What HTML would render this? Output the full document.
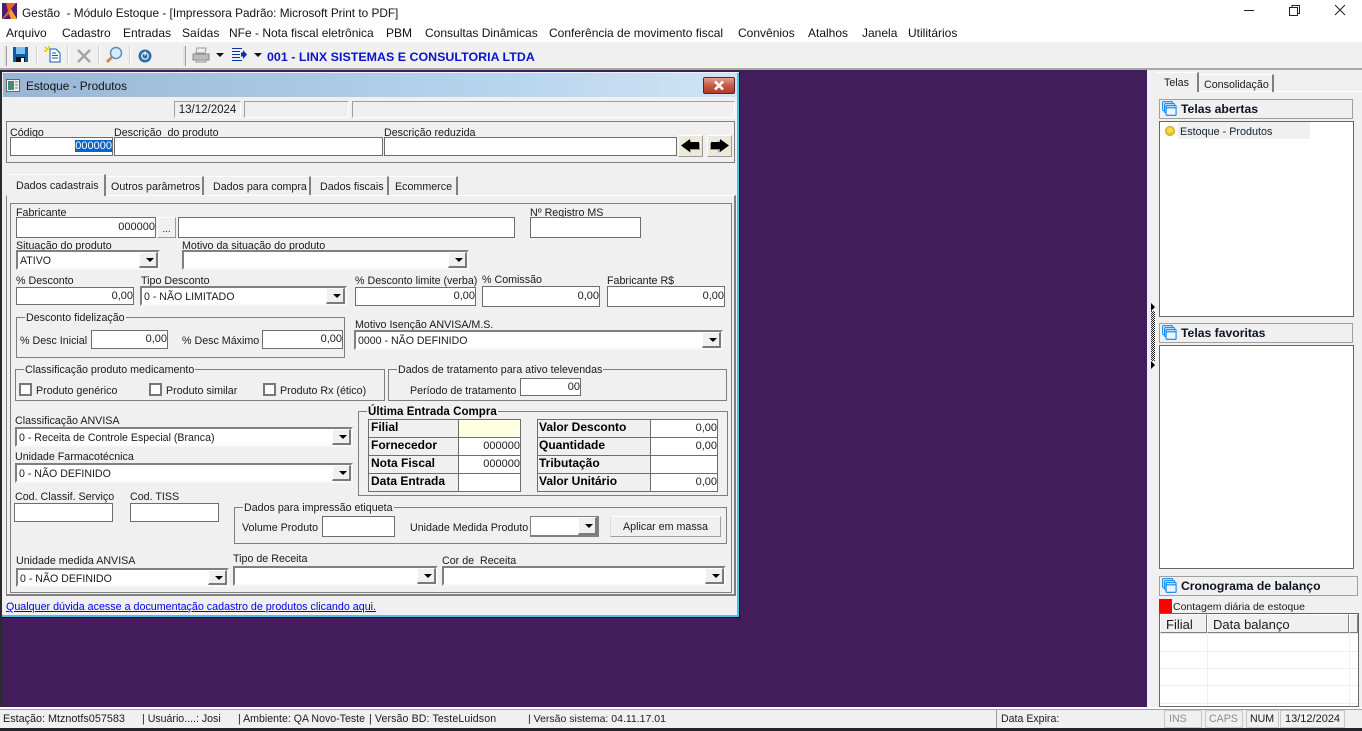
<!DOCTYPE html>
<html lang="pt">
<head>
<meta charset="utf-8">
<title>Gestão</title>
<style>
*{box-sizing:border-box}
html,body{margin:0;padding:0;width:1362px;height:731px;overflow:hidden;background:#f0f0f0}
body{position:relative;font-family:"Liberation Sans",sans-serif;font-size:10.7px;color:#1a1a1a}
.a,.t,.i,.c,.g,.b,.r{position:absolute}
.t{white-space:pre;line-height:14px;height:14px;margin-top:1px}
.i{background:#fff;border:1px solid #6d6d6d;text-align:right;white-space:pre;padding-right:0;font-size:11px}
.c{background:#fff;border-style:solid;border-width:2px;border-color:#808080 #f8f8f8 #f8f8f8 #808080;white-space:pre;padding-left:2px;font-size:10.6px;line-height:19px}
.c:after{content:"";position:absolute;right:0;top:0;bottom:0;width:16px;background:#f0f0f0;border-style:solid;border-width:1px 2px 2px 1px;border-color:#fff #7a7a7a #7a7a7a #fff}
.c:before{content:"";position:absolute;z-index:2;right:4px;top:50%;margin-top:-2px;border-style:solid;border-width:4px 4px 0 4px;border-color:#000 transparent transparent transparent}
.g{border:1px solid #7e7e7e}
.g>span{position:absolute;left:8px;top:-7px;background:#f0f0f0;padding:0 1px;line-height:14px;white-space:pre}
.b{background:#f0f0f0;border-style:solid;border-width:1px;border-color:#fff #9a9a9a #9a9a9a #fff}
.r{background:#f0f0f0;border:1px solid #a0a0a0;font-weight:bold;font-size:12.2px;line-height:19px;padding-left:21px;color:#0d1326;white-space:pre}
.r svg{position:absolute;left:2px;top:1px}
.m{position:absolute;top:26px;font-size:12px;line-height:15px;white-space:pre;color:#111}
.cell{position:absolute;border:1px solid #6d6d6d;font-weight:bold;font-size:12px;line-height:15px;white-space:pre;padding-left:2px;color:#000}
.val{position:absolute;border:1px solid #6d6d6d;background:#fff;text-align:right;line-height:17px;white-space:pre;font-size:11px}
.sep{position:absolute;top:46px;width:2px;height:19px;background:#d0d0d0;border-right:1px solid #fff}
.tab{position:absolute;top:176px;height:19px;background:#f0f0f0;border-top:1px solid #fff;border-right:2px solid #808080;line-height:20px;white-space:pre;font-size:10.7px}
.sb{position:absolute;top:710px;height:18px;line-height:18px;white-space:pre;font-size:10.6px}
.cb{position:absolute;width:13px;height:13px;background:#fff;border:2px solid #777;top:383px}
</style>
</head>
<body>
<!-- Title bar -->
<div class="a" style="left:0;top:0;width:1362px;height:42px;background:#fff"></div>
<svg class="a" style="left:2px;top:3px" width="15" height="16" viewBox="0 0 15 16"><rect width="15" height="16" fill="#4b1d78"/><path d="M4 0h10L9 6l6 10H9L7 11l-6 5H0l6-8z" fill="#e8632a"/><path d="M9 6l6 10H9L7 11z" fill="#f4a32a"/></svg>
<div class="t" style="left:22px;top:5px;font-size:11.8px;color:#111">Gestão  - Módulo Estoque - [Impressora Padrão: Microsoft Print to PDF]</div>
<svg class="a" style="left:1240px;top:2px" width="112" height="18" viewBox="0 0 112 18" fill="none" stroke="#222" stroke-width="1"><path d="M4 8.500h10"/><path d="M49.500 5.500h8v8h-8z"/><path d="M52 5.500V3.500h7.500v8H58"/><path d="M95 3l10 10M105 3L95 13"/></svg>
<!-- Menu -->
<div class="m" style="left:6px">Arquivo</div><div class="m" style="left:62px">Cadastro</div><div class="m" style="left:123px">Entradas</div><div class="m" style="left:182px">Saídas</div><div class="m" style="left:229px">NFe - Nota fiscal eletrônica</div><div class="m" style="left:386px">PBM</div><div class="m" style="left:425px">Consultas Dinâmicas</div><div class="m" style="left:549px">Conferência de movimento fiscal</div><div class="m" style="left:738px">Convênios</div><div class="m" style="left:808px">Atalhos</div><div class="m" style="left:862px">Janela</div><div class="m" style="left:908px">Utilitários</div>
<!-- Toolbar -->
<div class="a" style="left:0;top:42px;width:1362px;height:26px;background:#f0f0f0"></div>
<div class="a" style="left:0;top:68px;width:1362px;height:2px;background:#a8a8a8"></div>
<div class="a" style="left:4px;top:46px;width:3px;height:20px;background:#e2e2e2;border-right:1px solid #a0a0a0"></div>
<svg class="a" style="left:13px;top:47px" width="15" height="15" viewBox="0 0 15 15"><rect width="15" height="15" fill="#0a5fa8"/><rect x="3" y="0" width="9" height="7" fill="#7fc0ee"/><rect x="3" y="10" width="9" height="5" fill="#111"/><rect x="8" y="11" width="3" height="4" fill="#fff"/></svg>
<div class="sep" style="left:36px"></div>
<svg class="a" style="left:44px;top:46px" width="17" height="17" viewBox="0 0 17 17"><path d="M6 3h6l4 4v9H6z" fill="#fff" stroke="#1458b0"/><path d="M8 7h4M8 9.500h6M8 12h6" stroke="#1458b0"/><path d="M1 1l3 3M5 0v3M0 5h3" stroke="#e6c400" stroke-width="1.500"/></svg>
<div class="sep" style="left:67px"></div>
<svg class="a" style="left:76px;top:48px" width="16" height="16" viewBox="0 0 16 16"><path d="M2 2l12 12M14 2L2 14" stroke="#a5a5a5" stroke-width="2.500"/></svg>
<div class="sep" style="left:98px"></div>
<svg class="a" style="left:105px;top:46px" width="18" height="18" viewBox="0 0 18 18"><circle cx="11" cy="7" r="5.500" fill="#d5ecfa" stroke="#5a8fb5" stroke-width="1.500"/><path d="M7 11l-5 5" stroke="#c98a4a" stroke-width="3"/></svg>
<div class="sep" style="left:129px"></div>
<svg class="a" style="left:138px;top:49px" width="14" height="14" viewBox="0 0 14 14"><circle cx="7" cy="7" r="6.500" fill="#2a6ea8"/><circle cx="7" cy="7" r="3.200" fill="none" stroke="#fff" stroke-width="1.200"/><path d="M7 2.500v4" stroke="#fff" stroke-width="1.200"/></svg>
<div class="a" style="left:183px;top:46px;width:3px;height:20px;background:#e2e2e2;border-right:1px solid #a0a0a0"></div>
<svg class="a" style="left:192px;top:47px" width="18" height="16" viewBox="0 0 18 16"><path d="M5 1h9l-1 5H4z" fill="#eee" stroke="#999"/><path d="M1 7h16v6H1z" fill="#bbb" stroke="#888"/><path d="M4 13h10v2H4z" fill="#ddd" stroke="#999"/></svg>
<div class="a" style="left:216px;top:53px;border-style:solid;border-width:4px 4px 0;border-color:#111 transparent transparent"></div>
<svg class="a" style="left:232px;top:48px" width="15" height="14" viewBox="0 0 15 14"><path d="M0 .500h10M0 3.500h8M0 6.500h8M0 9.500h8M0 12.500h10" stroke="#0b2fb0"/><path d="M9 4.500h2V2l4 4.500-4 4.500V8.500H9z" fill="#0b2fb0"/></svg>
<div class="a" style="left:254px;top:53px;border-style:solid;border-width:4px 4px 0;border-color:#111 transparent transparent"></div>
<div class="t" style="left:267px;top:49px;font-weight:bold;font-size:12.4px;color:#0a14c8;letter-spacing:.03px">001 - LINX SISTEMAS E CONSULTORIA LTDA</div>
<!-- Desktop -->
<div class="a" style="left:0;top:70px;width:1147px;height:637px;background:#431d5b"></div>
<div class="a" style="left:0;top:70px;width:2px;height:637px;background:#2a2a2a"></div>
<div class="a" style="left:0;top:707px;width:1362px;height:2px;background:#fff"></div>
<!-- Child window -->
<div class="a" style="left:2px;top:72px;width:738px;height:546px;background:#f0f0f0;border-right:1px solid #111;border-bottom:1px solid #111"></div>
<div class="a" style="left:737px;top:73px;width:2px;height:544px;background:#3fc6e8"></div>
<div class="a" style="left:2px;top:615px;width:737px;height:2px;background:#3fc6e8"></div>
<div class="a" style="left:3px;top:73px;width:734px;height:24px;background:linear-gradient(90deg,#98b6d4,#b9d5ee 70%,#cfe4f5)"></div>
<svg class="a" style="left:6px;top:79px" width="14" height="13" viewBox="0 0 14 13"><rect x=".5" y=".5" width="13" height="12" fill="#f4f4f4" stroke="#666"/><rect x="2" y="2" width="6" height="9" fill="#3f8f78"/><path d="M9 3h3M9 6h3M9 9h3" stroke="#777"/></svg>
<div class="t" style="left:26px;top:78px;font-size:11.8px;color:#111">Estoque - Produtos</div>
<div class="a" style="left:703px;top:77px;width:32px;height:17px;border:1px solid #52262a;border-radius:2px;background:linear-gradient(#e3a096,#c75a47 50%,#b23a28)"></div>
<svg class="a" style="left:713px;top:80px" width="12" height="11" viewBox="0 0 12 11"><path d="M2 1.500l8 8M10 1.500l-8 8" stroke="#fff" stroke-width="2.600"/></svg>
<!-- Date boxes -->
<div class="a" style="left:174px;top:101px;width:67px;height:17px;border:1px solid;border-color:#a0a0a0 #fff #fff #a0a0a0;line-height:16px;text-align:center;font-size:11.5px">13/12/2024</div>
<div class="a" style="left:244px;top:101px;width:105px;height:17px;border:1px solid;border-color:#a0a0a0 #fff #fff #a0a0a0"></div>
<div class="a" style="left:352px;top:101px;width:383px;height:17px;border:1px solid;border-color:#a0a0a0 #fff #fff #a0a0a0"></div>
<!-- Search group -->
<div class="g" style="left:6px;top:121px;width:729px;height:42px"></div>
<div class="t" style="left:10px;top:125px">Código</div>
<div class="t" style="left:114px;top:125px">Descrição  do produto</div>
<div class="t" style="left:384px;top:125px">Descrição reduzida</div>
<div class="i" style="left:10px;top:137px;width:103px;height:19px;line-height:16px"><span style="background:#0a64c8;color:#fff;padding-left:0">000000</span></div>
<div class="i" style="left:114px;top:137px;width:269px;height:19px"></div>
<div class="i" style="left:384px;top:137px;width:293px;height:19px"></div>
<div class="b" style="left:678px;top:135px;width:25px;height:22px;background:#ece9d8"></div>
<svg class="a" style="left:680px;top:138px" width="22" height="16" viewBox="0 0 22 16"><path d="M11 2v3h9v7h-9v3L2 8.500z" fill="#999"/><path d="M10 1v3h9v7h-9v3L1 7.500z" fill="#000"/></svg>
<div class="b" style="left:707px;top:135px;width:25px;height:22px;background:#ece9d8"></div>
<svg class="a" style="left:708px;top:138px" width="22" height="16" viewBox="0 0 22 16"><path d="M10 2v3H2v7h8v3l9-6.500z" fill="#999"/><path d="M12 1v3H3v7h9v3l9-6.500z" fill="#000"/></svg>
<!-- Tabs -->
<div class="a" style="left:6px;top:195px;width:730px;height:401px;border:1px solid #808080;border-top:1px solid #fff;border-width:1px 2px 2px 1px"></div>
<div class="tab" style="left:106px;width:98px;padding-left:5px">Outros parâmetros</div>
<div class="tab" style="left:204px;width:107px;padding-left:9px">Dados para compra</div>
<div class="tab" style="left:311px;width:78px;padding-left:9px">Dados fiscais</div>
<div class="tab" style="left:389px;width:69px;padding-left:6px">Ecommerce</div>
<div class="tab" style="left:8px;top:174px;height:22px;width:98px;padding-left:8px;z-index:2;line-height:22px">Dados cadastrais</div>
<!-- Panel -->
<div class="a" style="left:10px;top:203px;width:722px;height:390px;border:1px solid #808080"></div>
<div class="t" style="left:16px;top:205px">Fabricante</div>
<div class="i" style="left:16px;top:217px;width:140px;height:21px;line-height:18px">000000</div>
<div class="b" style="left:157px;top:217px;width:19px;height:21px;text-align:center;line-height:24px;font-size:10px">...</div>
<div class="i" style="left:178px;top:217px;width:337px;height:21px"></div>
<div class="t" style="left:530px;top:205px">Nº Registro MS</div>
<div class="i" style="left:530px;top:217px;width:111px;height:21px"></div>
<div class="t" style="left:16px;top:238px">Situação do produto</div>
<div class="c" style="left:16px;top:250px;width:144px;height:20px">ATIVO</div>
<div class="t" style="left:182px;top:238px">Motivo da situação do produto</div>
<div class="c" style="left:182px;top:250px;width:287px;height:20px"></div>
<div class="t" style="left:16px;top:273px">% Desconto</div>
<div class="i" style="left:16px;top:287px;width:118px;height:18px;line-height:16px">0,00</div>
<div class="t" style="left:141px;top:273px">Tipo Desconto</div>
<div class="c" style="left:140px;top:286px;width:207px;height:20px">0 - NÃO LIMITADO</div>
<div class="t" style="left:355px;top:273px">% Desconto limite (verba)</div>
<div class="i" style="left:355px;top:287px;width:121px;height:19px;line-height:17px">0,00</div>
<div class="t" style="left:482px;top:272px">% Comissão</div>
<div class="i" style="left:482px;top:286px;width:118px;height:21px;line-height:18px">0,00</div>
<div class="t" style="left:607px;top:273px">Fabricante R$</div>
<div class="i" style="left:607px;top:286px;width:118px;height:21px;line-height:18px">0,00</div>
<!-- Desconto fidelização -->
<div class="g" style="left:16px;top:317px;width:329px;height:41px"><span>Desconto fidelização</span></div>
<div class="t" style="left:20px;top:333px">% Desc Inicial</div>
<div class="i" style="left:91px;top:330px;width:77px;height:19px;line-height:17px">0,00</div>
<div class="t" style="left:182px;top:333px">% Desc Máximo</div>
<div class="i" style="left:262px;top:330px;width:81px;height:19px;line-height:17px">0,00</div>
<div class="t" style="left:355px;top:317px">Motivo Isenção ANVISA/M.S.</div>
<div class="c" style="left:354px;top:330px;width:369px;height:20px">0000 - NÃO DEFINIDO</div>
<!-- Classificação -->
<div class="g" style="left:15px;top:369px;width:370px;height:32px"><span>Classificação produto medicamento</span></div>
<div class="cb" style="left:19px"></div><div class="t" style="left:36px;top:383px">Produto genérico</div>
<div class="cb" style="left:149px"></div><div class="t" style="left:166px;top:383px">Produto similar</div>
<div class="cb" style="left:263px"></div><div class="t" style="left:280px;top:383px">Produto Rx (ético)</div>
<div class="g" style="left:388px;top:369px;width:339px;height:32px"><span>Dados de tratamento para ativo televendas</span></div>
<div class="t" style="left:410px;top:383px">Período de tratamento</div>
<div class="i" style="left:520px;top:378px;width:61px;height:18px;line-height:16px">00</div>
<!-- ANVISA -->
<div class="t" style="left:15px;top:413px">Classificação ANVISA</div>
<div class="c" style="left:15px;top:427px;width:338px;height:20px">0 - Receita de Controle Especial (Branca)</div>
<div class="t" style="left:15px;top:449px">Unidade Farmacotécnica</div>
<div class="c" style="left:15px;top:463px;width:338px;height:20px">0 - NÃO DEFINIDO</div>
<div class="t" style="left:15px;top:489px">Cod. Classif. Serviço</div>
<div class="i" style="left:14px;top:503px;width:99px;height:19px"></div>
<div class="t" style="left:130px;top:489px">Cod. TISS</div>
<div class="i" style="left:130px;top:503px;width:89px;height:19px"></div>
<!-- Última entrada -->
<div class="g" style="left:358px;top:411px;width:370px;height:85px"><span style="font-weight:bold;font-size:11.5px;color:#000;letter-spacing:.05px">Última Entrada Compra</span></div>
<div class="cell" style="left:368px;top:419px;width:91px;height:19px">Filial</div>
<div class="val" style="left:458px;top:419px;width:63px;height:19px;background:#ffffe1"></div>
<div class="cell" style="left:368px;top:437px;width:91px;height:19px">Fornecedor</div>
<div class="val" style="left:458px;top:437px;width:63px;height:19px">000000</div>
<div class="cell" style="left:368px;top:455px;width:91px;height:19px">Nota Fiscal</div>
<div class="val" style="left:458px;top:455px;width:63px;height:19px">000000</div>
<div class="cell" style="left:368px;top:473px;width:91px;height:19px">Data Entrada</div>
<div class="val" style="left:458px;top:473px;width:63px;height:19px"></div>
<div class="cell" style="left:537px;top:419px;width:114px;height:19px;padding-left:1px">Valor Desconto</div>
<div class="val" style="left:650px;top:419px;width:68px;height:19px">0,00</div>
<div class="cell" style="left:537px;top:437px;width:114px;height:19px;padding-left:1px">Quantidade</div>
<div class="val" style="left:650px;top:437px;width:68px;height:19px">0,00</div>
<div class="cell" style="left:537px;top:455px;width:114px;height:19px;padding-left:1px">Tributação</div>
<div class="val" style="left:650px;top:455px;width:68px;height:19px"></div>
<div class="cell" style="left:537px;top:473px;width:114px;height:19px;padding-left:1px">Valor Unitário</div>
<div class="val" style="left:650px;top:473px;width:68px;height:19px">0,00</div>
<!-- Etiqueta -->
<div class="g" style="left:234px;top:507px;width:493px;height:37px"><span>Dados para impressão etiqueta</span></div>
<div class="t" style="left:242px;top:520px">Volume Produto</div>
<div class="i" style="left:322px;top:516px;width:73px;height:21px"></div>
<div class="t" style="left:410px;top:520px">Unidade Medida Produto</div>
<div class="c" style="left:530px;top:516px;width:69px;height:21px;border-color:#808080 #808080 #808080 #808080;border-width:1px 2px 2px 1px"></div>
<div class="b" style="left:610px;top:516px;width:111px;height:21px;text-align:center;line-height:21px;border-color:#fff #a0a0a0 #a0a0a0 #dcdcdc">Aplicar em massa</div>
<!-- Bottom -->
<div class="t" style="left:16px;top:553px">Unidade medida ANVISA</div>
<div class="c" style="left:16px;top:568px;width:213px;height:19px">0 - NÃO DEFINIDO</div>
<div class="t" style="left:233px;top:551px">Tipo de Receita</div>
<div class="c" style="left:233px;top:566px;width:205px;height:20px"></div>
<div class="t" style="left:442px;top:553px">Cor de  Receita</div>
<div class="c" style="left:442px;top:566px;width:284px;height:20px"></div>
<div class="t" style="left:6px;top:599px;color:#0000ee;text-decoration:underline;font-size:10.72px">Qualquer dúvida acesse a documentação cadastro de produtos clicando aqui.</div>
<!-- Splitter -->
<svg class="a" style="left:1150px;top:302px" width="6" height="68" viewBox="0 0 6 68"><defs><pattern id="h" width="2" height="2" patternUnits="userSpaceOnUse"><rect width="1" height="1" fill="#222"/><rect x="1" y="1" width="1" height="1" fill="#222"/></pattern></defs><rect x="1" y="9" width="4" height="50" fill="url(#h)"/><path d="M1 1l4 4-4 4zM1 59l4 4-4 4z" fill="#000"/></svg>
<!-- Right panel tabs -->
<div class="a" style="left:1157px;top:91px;width:205px;height:1px;background:#fff"></div>
<div class="a" style="left:1198px;top:74px;width:76px;height:18px;border-top:1px solid #fff;border-right:2px solid #808080;padding-left:6px;line-height:20px;font-size:10.7px;white-space:pre">Consolidação</div>
<div class="a" style="left:1157px;top:72px;width:42px;height:20px;border-top:1px solid #fff;border-right:2px solid #808080;padding-left:7px;line-height:21px;font-size:10.7px;background:#f0f0f0">Telas</div>
<div class="r" style="left:1159px;top:99px;width:194px;height:20px">Telas abertas<svg width="15" height="15" viewBox="0 0 15 15" fill="#eef4fb" stroke="#1e90f0" stroke-width="1.200"><rect x=".6" y=".6" width="10" height="9" rx="1"/><rect x="2.600" y="2.600" width="10" height="9" rx="1"/><rect x="4.100" y="4.600" width="10" height="9.800" rx="1"/><path d="M4.100 6.800h10"/></svg></div>
<div class="a" style="left:1159px;top:121px;width:195px;height:196px;background:#fff;border:1px solid #666"></div>
<div class="a" style="left:1178px;top:122px;width:132px;height:17px;background:#f0f0f0"></div>
<div class="a" style="left:1165px;top:126px;width:10px;height:10px;border-radius:50%;background:radial-gradient(circle at 50% 40%,#ffe760,#e5b400);border:1px solid #c8a020"></div>
<div class="t" style="left:1180px;top:124px;font-size:10.8px;color:#123">Estoque - Produtos</div>
<div class="r" style="left:1159px;top:323px;width:194px;height:20px">Telas favoritas<svg width="15" height="15" viewBox="0 0 15 15" fill="#eef4fb" stroke="#1e90f0" stroke-width="1.200"><rect x=".6" y=".6" width="10" height="9" rx="1"/><rect x="2.600" y="2.600" width="10" height="9" rx="1"/><rect x="4.100" y="4.600" width="10" height="9.800" rx="1"/><path d="M4.100 6.800h10"/></svg></div>
<div class="a" style="left:1159px;top:345px;width:195px;height:224px;background:#fff;border:1px solid #666"></div>
<div class="r" style="left:1159px;top:576px;width:199px;height:20px">Cronograma de balanço<svg width="15" height="15" viewBox="0 0 15 15" fill="#eef4fb" stroke="#1e90f0" stroke-width="1.200"><rect x=".6" y=".6" width="10" height="9" rx="1"/><rect x="2.600" y="2.600" width="10" height="9" rx="1"/><rect x="4.100" y="4.600" width="10" height="9.800" rx="1"/><path d="M4.100 6.800h10"/></svg></div>
<div class="a" style="left:1159px;top:599px;width:13px;height:14px;background:#f00"></div>
<div class="t" style="left:1173px;top:599px;font-size:10.5px">Contagem diária de estoque</div>
<!-- Grid -->
<div class="a" style="left:1159px;top:613px;width:200px;height:94px;background:#fff;border:1px solid #666"></div>
<div class="a" style="left:1160px;top:633px;width:198px;height:1px;background:#e8e8e8"></div>
<div class="a" style="left:1160px;top:651px;width:198px;height:1px;background:#f0f0f0"></div>
<div class="a" style="left:1160px;top:668px;width:198px;height:1px;background:#f0f0f0"></div>
<div class="a" style="left:1160px;top:685px;width:198px;height:1px;background:#f0f0f0"></div>
<div class="a" style="left:1160px;top:703px;width:198px;height:1px;background:#f0f0f0"></div>
<div class="a" style="left:1207px;top:633px;width:1px;height:73px;background:#f0f0f0"></div>
<div class="a" style="left:1349px;top:633px;width:1px;height:73px;background:#f0f0f0"></div>
<div class="b" style="left:1160px;top:614px;width:47px;height:19px;border-color:#fff #808080 #808080 #fff;padding-left:5px;line-height:19px;font-size:13px">Filial</div>
<div class="b" style="left:1207px;top:614px;width:142px;height:19px;border-color:#fff #808080 #808080 #fff;padding-left:5px;line-height:19px;font-size:13px">Data balanço</div>
<div class="b" style="left:1349px;top:614px;width:9px;height:19px;border-color:#fff #808080 #808080 #fff"></div>
<!-- Status bar -->
<div class="a" style="left:0;top:709px;width:1362px;height:1px;background:#a0a0a0"></div>
<div class="a" style="left:0;top:728px;width:1362px;height:3px;background:#25232b"></div>
<div class="sb" style="left:3px;font-size:10.8px">Estação: Mtznotfs057583</div>
<div class="sb" style="left:142px">| Usuário....: Josi</div>
<div class="sb" style="left:238px">| Ambiente: QA Novo-Teste</div>
<div class="sb" style="left:369px;letter-spacing:.11px">| Versão BD: TesteLuidson</div>
<div class="sb" style="left:528px;font-size:10.5px">| Versão sistema: 04.11.17.01</div>
<div class="sb" style="left:996px;width:164px;border-left:1px solid #a0a0a0;padding-left:4px">Data Expira:</div>
<div class="sb" style="left:1164px;width:38px;border:1px solid #c8c8c8;padding-left:4px;color:#8c8c8c;line-height:16px">INS</div>
<div class="sb" style="left:1205px;width:38px;border:1px solid #c8c8c8;padding-left:3px;color:#8c8c8c;line-height:16px">CAPS</div>
<div class="sb" style="left:1246px;width:33px;border:1px solid #c8c8c8;padding-left:3px;line-height:16px">NUM</div>
<div class="sb" style="left:1280px;width:65px;border:1px solid #c8c8c8;padding-left:4px;font-size:11px;line-height:16px">13/12/2024</div>
</body>
</html>
